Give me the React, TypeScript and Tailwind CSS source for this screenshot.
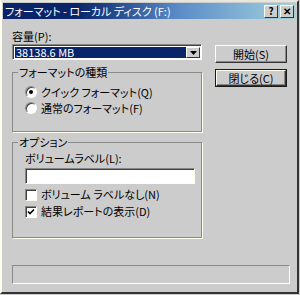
import { ReactNode } from "react";

const font = "font-['Noto_Sans_CJK_JP','Liberation_Sans',sans-serif] [font-feature-settings:'palt']";

function RaisedButton({ children, isDefault }: { children: ReactNode; isDefault?: boolean }) {
  return (
    <div className={`w-[72px] h-[18px] ${isDefault ? "border border-[#1a1a1a]" : ""}`}>
      <div className="h-full flex items-center justify-center bg-[#cccccc] border-t border-l border-t-[#fffff0] border-l-[#fffff0] border-r border-b border-r-[#333] border-b-[#333] shadow-[inset_-1px_-1px_0_#888] text-[11px] leading-none text-black">
        {children}
      </div>
    </div>
  );
}

function Radio({ checked, label }: { checked?: boolean; label: string }) {
  return (
    <div className="flex items-center h-[16px] gap-[4px]">
      <div className="w-[12px] h-[12px] rounded-full bg-white border border-t-[#888] border-l-[#888] border-r-[#fffff0] border-b-[#fffff0] shadow-[inset_1px_1px_0_#404040] flex items-center justify-center">
        {checked && <div className="w-[4px] h-[4px] rounded-full bg-black" />}
      </div>
      <span className="text-[11px] leading-none">{label}</span>
    </div>
  );
}

function Check({ checked, label }: { checked?: boolean; label: string }) {
  return (
    <div className="flex items-center h-[17px] gap-[4px]">
      <div className="w-[12px] h-[12px] bg-white border border-t-[#888] border-l-[#888] border-r-[#fffff0] border-b-[#fffff0] shadow-[inset_1px_1px_0_#404040] flex items-center justify-center">
        {checked && (
          <svg width="8" height="8" viewBox="0 0 8 8">
            <path d="M1 3.5 L3 5.5 L7 1.5" stroke="#000" strokeWidth="1.6" fill="none" />
          </svg>
        )}
      </div>
      <span className="text-[11px] leading-none">{label}</span>
    </div>
  );
}

function Group({ title, className, children }: { title: string; className: string; children: ReactNode }) {
  return (
    <fieldset className={`border border-[#8a8a8a] shadow-[1px_1px_0_#fffff0] p-0 ${className}`}>
      <legend className="ml-[5px] px-[1px] text-[11px] leading-[14px]">{title}</legend>
      {children}
    </fieldset>
  );
}

export default function App() {
  return (
    <div className={`w-[300px] h-[295px] bg-[#cccccc] text-black ${font}`}>
      <div className="w-[299px] h-[294px] flex flex-col border-2 border-t-[#e6e6dc] border-l-[#fffff0] border-r-[#333] border-b-[#333] p-px">
        {/* Title bar */}
        <div className="h-[16px] flex items-center justify-between pl-[2px] pr-[2px] bg-linear-to-r from-[#0a246a] from-25% via-[#5b8cc8] via-60% to-[#a4d2dc]">
          <span className="text-[11px] leading-none text-white">フォーマット - ローカル ディスク (F:)</span>
          <div className="flex gap-[2px]">
            <div className="w-[14px] h-[13px] flex items-center justify-center bg-[#cccccc] border-t border-l border-t-[#fffff0] border-l-[#fffff0] border-r border-b border-r-[#333] border-b-[#333] text-[10px] font-bold leading-none">?</div>
            <div className="w-[14px] h-[13px] flex items-center justify-center bg-[#cccccc] border-t border-l border-t-[#fffff0] border-l-[#fffff0] border-r border-b border-r-[#333] border-b-[#333] text-[10px] font-bold leading-none">✕</div>
          </div>
        </div>

        <div className="flex pl-[9px] pt-[10px]">
          {/* Left column */}
          <div className="w-[190px] flex flex-col">
            <div className="h-[14px] text-[11px] leading-[14px]">容量(P):</div>
            <div className="mt-[1px] h-[16px] flex bg-white border border-t-[#888] border-l-[#888] border-r-[#fffff0] border-b-[#fffff0] shadow-[inset_1px_1px_0_#404040] pl-[2px] pt-[2px] pb-px pr-px">
              <div className="flex-1 bg-[#0a246a] text-white text-[11px] leading-[11px] pl-[1px]">38138.6 MB</div>
              <div className="w-[14px] flex items-center justify-center bg-[#cccccc] border-t border-l border-t-[#fffff0] border-l-[#fffff0] border-r border-b border-r-[#333] border-b-[#333]">
                <svg width="7" height="4" viewBox="0 0 7 4"><path d="M0 0h7L3.5 4z" fill="#000" /></svg>
              </div>
            </div>

            <Group title="フォーマットの種類" className="mt-[5px] h-[67px]">
              <div className="pl-[12px] pt-[5px] flex flex-col">
                <Radio checked label="クイック フォーマット(Q)" />
                <Radio label="通常のフォーマット(F)" />
              </div>
            </Group>

            <Group title="オプション" className="mt-[3px] h-[103px]">
              <div className="pl-[12px] pr-[6px] pt-[2px] flex flex-col">
                <div className="text-[11px] leading-[14px]">ボリュームラベル(L):</div>
                <div className="mt-[3px] h-[16px] bg-white border border-t-[#888] border-l-[#888] border-r-[#fffff0] border-b-[#fffff0] shadow-[inset_1px_1px_0_#404040]" />
                <div className="mt-[2px]">
                  <Check label="ボリューム ラベルなし(N)" />
                  <Check checked label="結果レポートの表示(D)" />
                </div>
              </div>
            </Group>
          </div>

          {/* Right column */}
          <div className="ml-[13px] pt-[16px] flex flex-col gap-[6px]">
            <RaisedButton>開始(S)</RaisedButton>
            <RaisedButton isDefault>閉じる(C)</RaisedButton>
          </div>
        </div>

        {/* Status area */}
        <div className="ml-[9px] mt-[27px] w-[278px] h-[19px] border border-t-[#8a8a8a] border-l-[#8a8a8a] border-r-[#fffff0] border-b-[#fffff0]" />
      </div>
    </div>
  );
}
